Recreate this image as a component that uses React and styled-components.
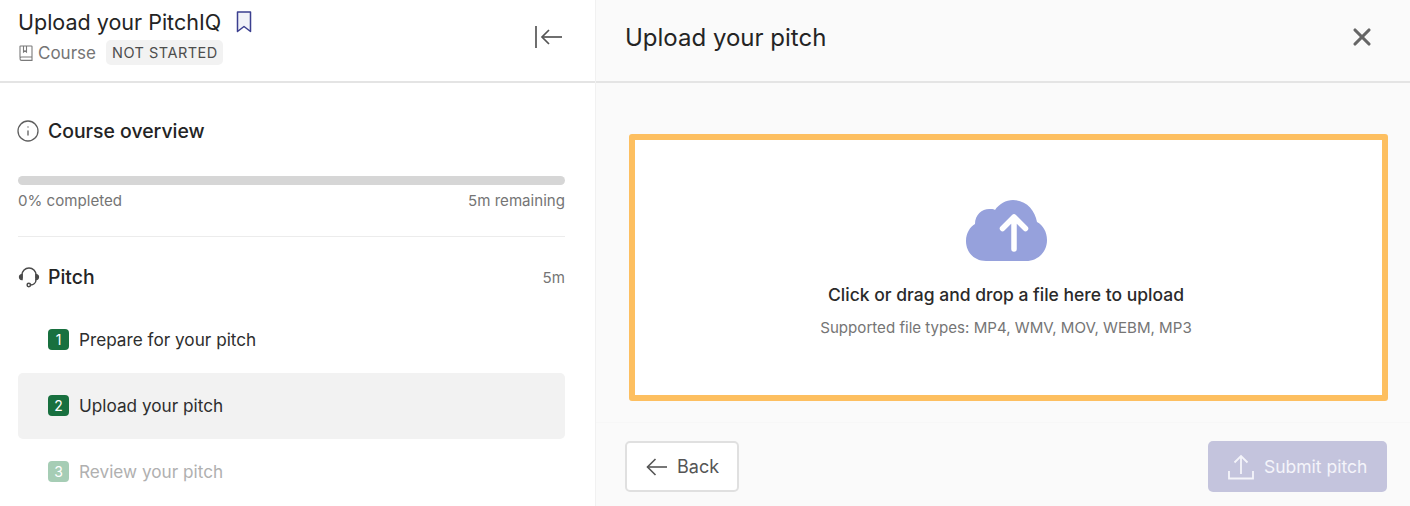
import styled, { createGlobalStyle } from "styled-components";
import { Info, X } from "lucide-react";

const GlobalStyle = createGlobalStyle`
  html, body {
    margin: 0;
    padding: 0;
    background: #ffffff;
    overflow: hidden;
  }
  * {
    box-sizing: border-box;
  }
`;

const steps = [
  { num: 1, label: "Prepare for your pitch" },
  { num: 2, label: "Upload your pitch", active: true },
  { num: 3, label: "Review your pitch", locked: true },
];

function BookmarkIcon() {
  return (
    <svg width="16" height="22" viewBox="0 0 16 22" fill="#f1f2f8" stroke="#3b3f8f" strokeWidth="1.5">
      <path d="M1.500 1h13v19.500L8 15.500 1.500 20.500z" strokeLinejoin="round" />
    </svg>
  );
}

function BookIcon() {
  return (
    <svg width="14" height="16" viewBox="0 0 14 16" fill="none" stroke="#7a7a7a" strokeWidth="1.1">
      <path d="M1 12.700V1.600C1 1.200 1.200 1 1.600 1h10.800c.3 0 .6.200.6.600v13.800H2.600C1.700 15.400 1 14.600 1 13.700s.7-1.700 1.600-1.700H13" />
      <path d="M4.500 1v6L6 5.800 7.500 7V1" />
    </svg>
  );
}

function HeadsetIcon() {
  return (
    <svg width="22" height="22" viewBox="0 0 22 22" fill="none" stroke="#4a4a4a" strokeWidth="1.5" strokeLinecap="round">
      <path d="M4 12V9a7 7 0 0 1 14 0v3" />
      <path d="M4 8.500C2.600 8.800 1.600 9.800 1.600 11S2.600 13.300 4 13.500z" fill="#4a4a4a" />
      <path d="M18 8.500c1.400.3 2.400 1.300 2.400 2.500s-1 2.300-2.400 2.500z" fill="#4a4a4a" />
      <path d="M18 13.500c0 3.500-2.500 5.500-5.500 5.500" />
      <circle cx="10.800" cy="19" r="1.700" />
    </svg>
  );
}

function CollapseIcon() {
  return (
    <svg width="27" height="24" viewBox="0 0 27 24" fill="none" stroke="#555555" strokeWidth="1.7">
      <path d="M1 1v22" />
      <path d="M27 12H7.500" />
      <path d="M14 5l-7 7 7 7" />
    </svg>
  );
}

function CloudIcon() {
  return (
    <svg width="82" height="62" viewBox="0 0 82 62">
      <path
        d="M20 61C8 61 0 52 0 41c0-8 4-14 9-17C9 14 17 8 25 9c2 0 3 0 4 1C33 4 40 0 47 0c13 0 22 10 24 22 6 3 10 10 10 18 0 12-9 21-21 21z"
        fill="#96a1dc"
      />
      <path d="M48 49V17M36.500 28.500 48 17l11.500 11.500" fill="none" stroke="#ffffff" strokeWidth="5.500" strokeLinecap="round" strokeLinejoin="round" />
    </svg>
  );
}

function BackArrow() {
  return (
    <svg width="21" height="18" viewBox="0 0 21 18" fill="none" stroke="#555555" strokeWidth="1.6">
      <path d="M21 9H1.500" />
      <path d="M9.500 1 1.500 9l8 8" />
    </svg>
  );
}

function UploadIcon() {
  return (
    <svg width="26" height="26" viewBox="0 0 26 26" fill="none" stroke="#f4f4fa" strokeWidth="1.8">
      <path d="M1 17v7.500h24V17" />
      <path d="M13 20V2M6.500 8.500 13 2l6.500 6.500" />
    </svg>
  );
}

export default function App() {
  return (
    <>
      <GlobalStyle />
      <Page>
        <Sidebar>
          <SidebarHeader>
            <div>
              <TitleRow>
                <Title>Upload your PitchIQ</Title>
                <BookmarkIcon />
              </TitleRow>
              <MetaRow>
                <BookIcon />
                <MetaText>Course</MetaText>
                <StatusBadge>NOT STARTED</StatusBadge>
              </MetaRow>
            </div>
            <CollapseIcon />
          </SidebarHeader>
          <SidebarBody>
            <SectionHead>
              <Info size={24} color="#5f5f5f" strokeWidth={1.3} />
              <SectionTitle>Course overview</SectionTitle>
            </SectionHead>
            <ProgressTrack />
            <ProgressText>
              <span>0% completed</span>
              <span>5m remaining</span>
            </ProgressText>
            <Divider />
            <PitchHead>
              <HeadsetIcon />
              <SectionTitle>Pitch</SectionTitle>
              <Duration>5m</Duration>
            </PitchHead>
            <StepList>
              {steps.map((step) => (
                <StepRow key={step.num} $active={step.active} $locked={step.locked}>
                  <StepNumber $locked={step.locked}>{step.num}</StepNumber>
                  {step.label}
                </StepRow>
              ))}
            </StepList>
          </SidebarBody>
        </Sidebar>
        <Main>
          <MainHeader>
            <MainTitle>Upload your pitch</MainTitle>
            <X size={28} color="#666666" strokeWidth={2.7} />
          </MainHeader>
          <DropArea>
            <DropZone>
              <CloudIcon />
              <DropText>Click or drag and drop a file here to upload</DropText>
              <DropHint>Supported file types: MP4, WMV, MOV, WEBM, MP3</DropHint>
            </DropZone>
          </DropArea>
          <Footer>
            <BackButton>
              <BackArrow />
              Back
            </BackButton>
            <SubmitButton disabled>
              <UploadIcon />
              Submit pitch
            </SubmitButton>
          </Footer>
        </Main>
      </Page>
    </>
  );
}

const Page = styled.div`
  display: flex;
  width: 1410px;
  height: 506px;
  overflow: hidden;
  font-family: "Inter", "Liberation Sans", sans-serif;
  color: #222222;
`;

const Sidebar = styled.div`
  width: 595px;
  flex-shrink: 0;
  background: #ffffff;
`;

const SidebarHeader = styled.div`
  height: 83px;
  padding: 8px 33px 0 18px;
  display: flex;
  justify-content: space-between;
  align-items: flex-start;
  border-bottom: 2px solid #e4e4e4;

  > svg {
    margin-top: 17px;
  }
`;

const TitleRow = styled.div`
  display: flex;
  align-items: center;
  gap: 15px;
  height: 28px;
`;

const Title = styled.div`
  font-size: 21.5px;
  line-height: 28px;
  color: #242424;
`;

const MetaRow = styled.div`
  display: flex;
  align-items: center;
  margin-top: 4px;
  margin-left: 1px;
`;

const MetaText = styled.span`
  font-size: 17px;
  color: #757575;
  margin-left: 5px;
`;

const StatusBadge = styled.span`
  margin-left: 10px;
  padding: 0 5px 0 6px;
  height: 25px;
  line-height: 25px;
  border-radius: 5px;
  background: #f2f2f2;
  font-size: 14.5px;
  letter-spacing: 0.5px;
  color: #4d4d4d;
`;

const SidebarBody = styled.div`
  padding: 0 30px 0 18px;
`;

const SectionHead = styled.div`
  display: flex;
  align-items: center;
  gap: 8px;
  height: 28px;
  margin-top: 34px;

  > svg:first-child {
    margin-left: -2px;
  }
`;

const SectionTitle = styled.div`
  font-size: 19.4px;
  font-weight: 500;
  color: #242424;
`;

const ProgressTrack = styled.div`
  height: 9px;
  margin-top: 31px;
  border-radius: 5px;
  background: #d6d6d6;
`;

const ProgressText = styled.div`
  display: flex;
  justify-content: space-between;
  margin-top: 7px;
  font-size: 15.1px;
  line-height: 18px;
  color: #757575;
`;

const Divider = styled.div`
  height: 1px;
  margin-top: 26px;
  background: #ececec;
`;

const PitchHead = styled(SectionHead)`
  margin-top: 26px;
  gap: 8px;

  > svg:first-child {
    margin-left: 0;
  }
`;

const Duration = styled.span`
  margin-left: auto;
  font-size: 15.1px;
  color: #757575;
`;

const StepList = styled.div`
  margin-top: 16px;
`;

const StepRow = styled.div`
  display: flex;
  align-items: center;
  gap: 10px;
  height: 66px;
  padding: 0 0 1px 30px;
  border-radius: 5px;
  font-size: 17.2px;
  background: ${(p) => (p.$active ? "#f2f2f2" : "transparent")};
  color: ${(p) => (p.$locked ? "#b0b0b0" : "#2e2e2e")};
`;

const StepNumber = styled.span`
  width: 21px;
  height: 21px;
  display: flex;
  align-items: center;
  justify-content: center;
  border-radius: 4px;
  font-size: 14px;
  color: #ffffff;
  background: ${(p) => (p.$locked ? "#a6cdb5" : "#18703f")};
`;

const Main = styled.div`
  flex: 1;
  display: flex;
  flex-direction: column;
  background: #fafafa;
  border-left: 1px solid #f1f1f1;
`;

const MainHeader = styled.div`
  height: 83px;
  flex-shrink: 0;
  padding: 0 34px 7px 29px;
  display: flex;
  align-items: center;
  justify-content: space-between;
  border-bottom: 2px solid #e4e4e4;
`;

const MainTitle = styled.div`
  font-size: 24px;
  color: #242424;
`;

const DropArea = styled.div`
  height: 340px;
  padding: 51px 22px 0 33px;
  border-bottom: 1px solid #f7f7f7;
`;

const DropZone = styled.div`
  height: 267px;
  display: flex;
  flex-direction: column;
  align-items: center;
  padding: 60px 5px 0 0;
  background: #ffffff;
  border: 6px solid #fdbf60;
  border-radius: 3px;

  > svg {
    margin-left: 2px;
  }
`;

const DropText = styled.div`
  margin-top: 22px;
  font-size: 17.5px;
  font-weight: 500;
  color: #2a2a2a;
`;

const DropHint = styled.div`
  margin-top: 13px;
  font-size: 15.1px;
  color: #757575;
`;

const Footer = styled.div`
  display: flex;
  justify-content: space-between;
  padding: 18px 23px 0 30px;
`;

const BaseButton = styled.button`
  height: 51px;
  display: flex;
  align-items: center;
  border-radius: 5px;
  font-family: inherit;
  font-size: 18px;
`;

const BackButton = styled(BaseButton)`
  width: 114px;
  margin-left: -1px;
  padding: 0 0 0 19px;
  gap: 10px;
  background: #ffffff;
  border: 2px solid #e0e0e0;
  color: #555555;
`;

const SubmitButton = styled(BaseButton)`
  width: 179px;
  padding: 0 0 0 20px;
  gap: 10px;
  border: none;
  font-size: 17.5px;
  background: #c4c4dd;
  color: #f4f4fa;
`;
